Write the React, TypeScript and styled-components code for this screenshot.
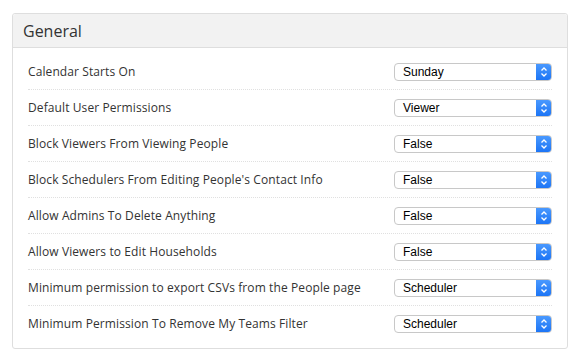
import React from "react";
import styled, { createGlobalStyle } from "styled-components";

const GlobalStyle = createGlobalStyle`
body{
margin:0;
background:#ffffff;
font-family: "Open Sans", "DejaVu Sans", sans-serif;
}
`

const Panel = styled.div`
margin: 13px 12px;
width: 556px;
box-sizing: border-box;
border: 1px solid #dedede;
border-radius: 3px;
background: #ffffff;
`
const PanelHeader = styled.div`
height: 33px;
background: #f2f2f2;
border-bottom: 1px solid #dedede;
border-radius: 3px 3px 0 0;
display: flex;
align-items: center;
padding-left: 10px;
font-size: 16px;
color: #333333;
`
const PanelBody = styled.div`
padding: 6px 15px 6px 15px;
`
const Row = styled.div<{ $last: boolean }>`
height: 35px;
display: flex;
align-items: center;
justify-content: space-between;
border-bottom: 1px dotted ${p => p.$last ? `transparent` : `#e0e0e0`};
`
const Label = styled.span`
font-size: 12px;
letter-spacing: 0.1px;
color: #333333;
`
const Select = styled.div`
position: relative;
width: 158px;
height: 18px;
box-sizing: border-box;
border: 1px solid #c8c8c8;
border-radius: 4px;
background: #ffffff;
display: flex;
align-items: center;
padding-left: 8px;
font-family: "Liberation Sans", Arial, sans-serif;
font-size: 12px;
color: #000000;
overflow: hidden;
`
const Arrow = styled.div`
position: absolute;
top: -1px;
right: -1px;
width: 16px;
height: 18px;
border-radius: 0 4px 4px 0;
background: linear-gradient(#4c9bff, #1a73f5);
display: flex;
align-items: center;
justify-content: center;
`

const settings = [
  { label: "Calendar Starts On", value: "Sunday" },
  { label: "Default User Permissions", value: "Viewer" },
  { label: "Block Viewers From Viewing People", value: "False" },
  { label: "Block Schedulers From Editing People's Contact Info", value: "False" },
  { label: "Allow Admins To Delete Anything", value: "False" },
  { label: "Allow Viewers to Edit Households", value: "False" },
  { label: "Minimum permission to export CSVs from the People page", value: "Scheduler" },
  { label: "Minimum Permission To Remove My Teams Filter", value: "Scheduler" },
];

const Chevrons = () => (
  <svg width="8" height="12" viewBox="0 0 8 12">
    <path d="M1.5 4.5 L4 2 L6.5 4.5 M1.5 7.5 L4 10 L6.5 7.5" fill="none" stroke="#ffffff" strokeWidth="1.3" />
  </svg>
);

export default function App() {
  return (
    <>
      <GlobalStyle />
      <Panel>
        <PanelHeader>General</PanelHeader>
        <PanelBody>
          {settings.map((s, i) => (
            <Row key={s.label} $last={i === settings.length - 1}>
              <Label>{s.label}</Label>
              <Select>
                {s.value}
                <Arrow><Chevrons /></Arrow>
              </Select>
            </Row>
          ))}
        </PanelBody>
      </Panel>
    </>
  );
}
